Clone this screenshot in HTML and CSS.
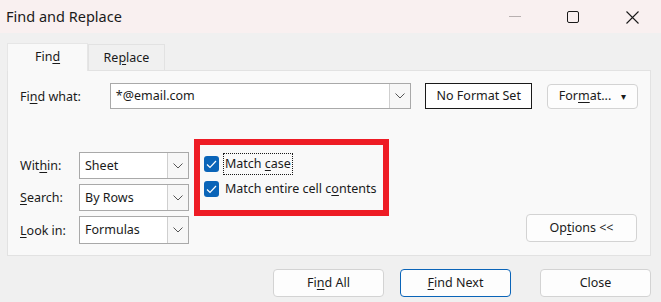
FILE: index.html
```html
<!DOCTYPE html>
<html lang="en">
<head>
  <meta charset="UTF-8" />
  <title>Find and Replace</title>
  <link rel="stylesheet" href="styles.css">
</head>
<body>
  <div class="window">
    <div class="titlebar">
      <span class="title">Find and Replace</span>
      <div class="controls">
        <span class="ctl min"></span>
        <span class="ctl max"></span>
        <span class="ctl close">
          <svg width="13" height="13" viewBox="0 0 13 13"><path d="M0.5 0.5 L12.5 12.5 M12.5 0.5 L0.5 12.5" stroke="#1a1a1a" stroke-width="1.1" fill="none"/></svg>
        </span>
      </div>
    </div>

    <div class="content">
      <div class="tabs">
        <div class="tab active">Fin<u>d</u></div>
        <div class="tab">Re<u>p</u>lace</div>
      </div>

      <div class="panel">
        <div class="find-row">
          <label class="lbl find-lbl">Fi<u>n</u>d what:</label>
          <div class="combo find-combo">
            <span class="combo-text">*@email.com</span>
            <span class="combo-btn"><svg width="10" height="6" viewBox="0 0 10 6"><path d="M0.5 0.5 L5 5 L9.5 0.5" stroke="#555" fill="none"/></svg></span>
          </div>
          <div class="format-set">No Format Set</div>
          <div class="btn format-btn">For<u>m</u>at... <span class="caret">&#9662;</span></div>
        </div>

        <div class="options-row">
          <div class="selects">
            <div class="sel-row">
              <label class="lbl">Wit<u>h</u>in:</label>
              <div class="combo">
                <span class="combo-text">Sheet</span>
                <span class="combo-btn"><svg width="10" height="6" viewBox="0 0 10 6"><path d="M0.5 0.5 L5 5 L9.5 0.5" stroke="#555" fill="none"/></svg></span>
              </div>
            </div>
            <div class="sel-row">
              <label class="lbl"><u>S</u>earch:</label>
              <div class="combo">
                <span class="combo-text">By Rows</span>
                <span class="combo-btn"><svg width="10" height="6" viewBox="0 0 10 6"><path d="M0.5 0.5 L5 5 L9.5 0.5" stroke="#555" fill="none"/></svg></span>
              </div>
            </div>
            <div class="sel-row">
              <label class="lbl"><u>L</u>ook in:</label>
              <div class="combo">
                <span class="combo-text">Formulas</span>
                <span class="combo-btn"><svg width="10" height="6" viewBox="0 0 10 6"><path d="M0.5 0.5 L5 5 L9.5 0.5" stroke="#555" fill="none"/></svg></span>
              </div>
            </div>
          </div>

          <div class="checks">
            <div class="check">
              <span class="box"><svg width="11" height="9" viewBox="0 0 11 9"><path d="M1 4.5 L4 7.5 L10 1" stroke="#fff" stroke-width="1.2" fill="none"/></svg></span>
              <span class="check-text focused">Match <u>c</u>ase</span>
            </div>
            <div class="check">
              <span class="box"><svg width="11" height="9" viewBox="0 0 11 9"><path d="M1 4.5 L4 7.5 L10 1" stroke="#fff" stroke-width="1.2" fill="none"/></svg></span>
              <span class="check-text">Match entire cell c<u>o</u>ntents</span>
            </div>
          </div>

          <div class="btn options-btn">Op<u>t</u>ions &lt;&lt;</div>
        </div>
      </div>

      <div class="actions">
        <div class="btn action">Fi<u>n</u>d All</div>
        <div class="btn action primary"><u>F</u>ind Next</div>
        <div class="btn action close-btn">Close</div>
      </div>
    </div>
  </div>
</body>
</html>
```

FILE: styles.css
```css
* {
  margin: 0;
  padding: 0;
  box-sizing: border-box;
}

body {
  font-family: 'Noto Sans', 'Open Sans', sans-serif;
  font-size: 12.5px;
  color: #1a1a1a;
  background: #f0f0f0;
  width: 661px;
  height: 302px;
  overflow: hidden;
}

u {
  text-decoration: underline;
  text-underline-offset: 2px;
}

.titlebar {
  height: 33px;
  background: #f9f0f0;
  display: flex;
  align-items: center;
  justify-content: space-between;
}

.title {
  font-size: 14.5px;
  padding-left: 6px;
  padding-bottom: 1px;
}

.controls {
  display: flex;
  align-items: center;
  height: 100%;
}

.ctl {
  display: flex;
  align-items: center;
  justify-content: center;
}

.min {
  width: 12px;
  height: 1px;
  background: #b8b0b0;
  margin-right: 46px;
}

.max {
  width: 12px;
  height: 12px;
  border: 1px solid #1a1a1a;
  border-radius: 2px;
  margin-right: 47px;
}

.close {
  margin-right: 22px;
  margin-top: 1px;
}

.content {
  padding: 10px 10px 0 7px;
}

.tabs {
  display: flex;
  align-items: flex-end;
  height: 27px;
}

.tab {
  height: 26px;
  display: flex;
  align-items: center;
  justify-content: center;
  border: 1px solid #e2e2e2;
  border-bottom: none;
  background: #f0f0f0;
  width: 77px;
}

.tab.active {
  height: 28px;
  width: 81px;
  background: #f9f9f9;
  border-color: #e6e6e6;
  position: relative;
  z-index: 1;
  margin-bottom: -1px;
  padding-bottom: 2px;
}

.panel {
  background: #f9f9f9;
  border: 1px solid #e2e2e2;
  height: 186px;
  padding: 12px 12px 0 12px;
}

.lbl {
  display: block;
}

.find-row {
  display: flex;
  align-items: center;
}

.find-lbl {
  width: 90px;
}

.combo {
  display: flex;
  height: 27px;
  background: #fff;
  border: 1px solid #a9a9a9;
}

.combo-text {
  flex: 1;
  display: flex;
  align-items: center;
  padding-left: 5px;
  padding-bottom: 1px;
}

.combo-btn {
  width: 21px;
  border-left: 1px solid #cfcfcf;
  background: #f7f7f7;
  display: flex;
  align-items: center;
  justify-content: center;
}

.find-combo {
  width: 302px;
  height: 26px;
}

.format-set {
  margin-left: 14px;
  width: 107px;
  height: 26px;
  border: 1px solid #1a1a1a;
  background: #fff;
  display: flex;
  align-items: center;
  justify-content: center;
  padding-bottom: 1px;
}

.btn {
  background: #fdfdfd;
  border: 1px solid #d3d3d3;
  border-radius: 4px;
  display: flex;
  align-items: center;
  justify-content: center;
  padding-bottom: 1px;
}

.format-btn {
  margin-left: 15px;
  width: 91px;
  height: 25px;
}

.caret {
  font-size: 10px;
  margin-left: 10px;
}

.options-row {
  display: flex;
  align-items: flex-start;
  margin-top: 30px;
  height: 105px;
}

.selects {
  margin-top: 13px;
  display: flex;
  flex-direction: column;
  gap: 5px;
}

.sel-row {
  display: flex;
  align-items: center;
}

.sel-row .lbl {
  width: 59px;
}

.sel-row .combo {
  width: 110px;
}

.sel-row:last-child .combo {
  height: 28px;
}

.checks {
  margin-left: 5px;
  width: 195px;
  height: 77px;
  border: 6px solid #ee1c25;
  padding: 8px 0 0 4px;
  display: flex;
  flex-direction: column;
  gap: 3px;
}

.check {
  display: flex;
  align-items: center;
}

.box {
  width: 15px;
  height: 16px;
  background: #0a64b8;
  border-radius: 3px;
  display: flex;
  align-items: center;
  justify-content: center;
  margin-right: 6px;
}

.check-text {
  border: 1px dotted transparent;
  padding: 1px 1px 2px 1px;
  margin-left: -2px;
}

.check-text.focused {
  border-color: #1a1a1a;
}

.options-btn {
  margin-left: auto;
  margin-right: 1px;
  align-self: flex-end;
  margin-bottom: 2px;
  width: 111px;
  height: 28px;
}

.actions {
  display: flex;
  justify-content: flex-end;
  margin-top: 13px;
}

.action {
  width: 111px;
  height: 28px;
}

.action + .action {
  margin-left: 16px;
}

.primary {
  border-color: #0a64b8;
}

.action.close-btn {
  margin-left: 29px;
}
```
